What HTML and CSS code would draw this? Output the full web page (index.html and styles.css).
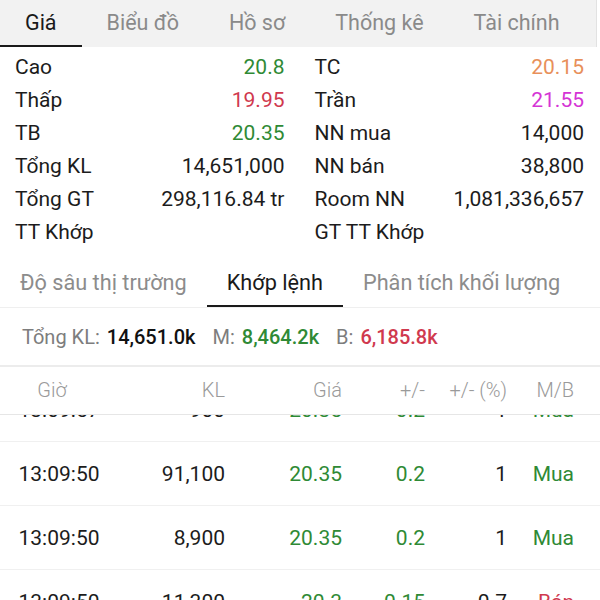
FILE: index.html
```html
<!DOCTYPE html>
<html lang="vi">
<head>
<meta charset="utf-8">
<title>Giá</title>
<link rel="stylesheet" href="styles.css">
</head>
<body>
<div class="app">
  <nav class="top-tabs">
    <div class="tab active">Giá</div>
    <div class="tab">Biểu đồ</div>
    <div class="tab">Hồ sơ</div>
    <div class="tab">Thống kê</div>
    <div class="tab">Tài chính</div>
  </nav>

  <section class="info">
    <div class="col">
      <div class="irow"><span>Cao</span><span class="up">20.8</span></div>
      <div class="irow"><span>Thấp</span><span class="down">19.95</span></div>
      <div class="irow"><span>TB</span><span class="up">20.35</span></div>
      <div class="irow"><span>Tổng KL</span><span>14,651,000</span></div>
      <div class="irow"><span>Tổng GT</span><span>298,116.84 tr</span></div>
      <div class="irow"><span>TT Khớp</span><span></span></div>
    </div>
    <div class="col">
      <div class="irow"><span>TC</span><span class="ref">20.15</span></div>
      <div class="irow"><span>Trần</span><span class="ceil">21.55</span></div>
      <div class="irow"><span>NN mua</span><span>14,000</span></div>
      <div class="irow"><span>NN bán</span><span>38,800</span></div>
      <div class="irow"><span>Room NN</span><span>1,081,336,657</span></div>
      <div class="irow"><span>GT TT Khớp</span><span></span></div>
    </div>
  </section>

  <nav class="sub-tabs">
    <div class="stab">Độ sâu thị trường</div>
    <div class="stab active">Khớp lệnh</div>
    <div class="stab">Phân tích khối lượng</div>
  </nav>

  <div class="summary">
    <span class="pair"><span class="lbl">Tổng KL:</span><span class="val">14,651.0k</span></span>
    <span class="pair"><span class="lbl">M:</span><span class="val up">8,464.2k</span></span>
    <span class="pair"><span class="lbl">B:</span><span class="val down">6,185.8k</span></span>
  </div>

  <div class="table">
    <div class="thead">
      <div class="c1 h1">Giờ</div>
      <div>KL</div>
      <div>Giá</div>
      <div>+/-</div>
      <div>+/- (%)</div>
      <div>M/B</div>
    </div>
    <div class="tbody-wrap">
      <div class="tbody">
        <div class="trow">
          <div class="c1">13:09:57</div><div>900</div><div class="up">20.35</div><div class="up">0.2</div><div>1</div><div class="up">Mua</div>
        </div>
        <div class="trow">
          <div class="c1">13:09:50</div><div>91,100</div><div class="up">20.35</div><div class="up">0.2</div><div>1</div><div class="up">Mua</div>
        </div>
        <div class="trow">
          <div class="c1">13:09:50</div><div>8,900</div><div class="up">20.35</div><div class="up">0.2</div><div>1</div><div class="up">Mua</div>
        </div>
        <div class="trow">
          <div class="c1">13:09:50</div><div>11,300</div><div class="up">20.3</div><div class="up">0.15</div><div>0.7</div><div class="down">Bán</div>
        </div>
      </div>
    </div>
  </div>
</div>
</body>
</html>
```

FILE: styles.css
```css
* { box-sizing: border-box; }
html, body {
  margin: 0;
  padding: 0;
  background: #fff;
}
body {
  font-family: Roboto, "Noto Sans", "Liberation Sans", sans-serif;
  color: #1c1c1c;
  width: 600px;
  height: 600px;
  overflow: hidden;
}
.app { width: 600px; }

.up { color: #2f8a35; }
.down { color: #d0394e; }
.ref { color: #e8905a; }
.ceil { color: #d534d5; }

/* top tabs */
.top-tabs {
  display: flex;
  height: 47px;
  background: #f2f2f2;
  border-right: 1px solid #e2e2e2;
  margin-right: 3px;
}
.top-tabs .tab {
  padding: 0 25px;
  font-size: 21.5px;
  color: #8a8a8a;
  display: flex;
  align-items: center;
  border-bottom: 2px solid transparent;
  white-space: nowrap;
}
.top-tabs .tab.active {
  color: #1a1a1a;
  border-bottom-color: #1a1a1a;
}

/* info */
.info {
  display: grid;
  grid-template-columns: 1fr 1fr;
  column-gap: 30px;
  padding: 3px 16px 12px 15px;
}
.irow {
  height: 33px;
  display: flex;
  justify-content: space-between;
  align-items: center;
  font-size: 21px;
  white-space: nowrap;
}

/* sub tabs */
.sub-tabs {
  display: flex;
  height: 48px;
  border-bottom: 1px solid #efefef;
}
.stab {
  padding: 0 20px;
  font-size: 21.7px;
  color: #8c8c8c;
  display: flex;
  align-items: center;
  border-bottom: 2px solid transparent;
  white-space: nowrap;
}
.stab.active {
  color: #1a1a1a;
  border-bottom-color: #1a1a1a;
}

/* summary */
.summary {
  height: 59px;
  display: flex;
  align-items: center;
  gap: 17px;
  padding-left: 22px;
  font-size: 20px;
  border-bottom: 2px solid #ececec;
  white-space: nowrap;
}
.summary .pair {
  display: flex;
  gap: 7px;
}
.summary .lbl { color: #7d7d7d; }
.summary .val { font-weight: 500; color: #111; }
.summary .val.up { color: #2f8a35; }
.summary .val.down { color: #d0394e; }

/* table */
.thead, .trow {
  display: grid;
  grid-template-columns: 118px 107px 117px 83px 82px 67px;
  align-items: center;
}
.thead > div, .trow > div { text-align: right; }
.thead .c1, .trow .c1 { text-align: center; }
.thead {
  height: 48px;
  padding-bottom: 1px;
  font-size: 20px;
  color: #9a9a9a;
  font-weight: 300;
  border-bottom: 1px solid #e6e6e6;
}
.thead .h1 { padding-right: 14px; }
.tbody-wrap {
  height: 185px;
  overflow: hidden;
}
.tbody { margin-top: -37px; }
.trow {
  height: 64px;
  font-size: 21px;
  border-bottom: 1px solid #f0f0f0;
}
.trow > div { white-space: nowrap; }
```
